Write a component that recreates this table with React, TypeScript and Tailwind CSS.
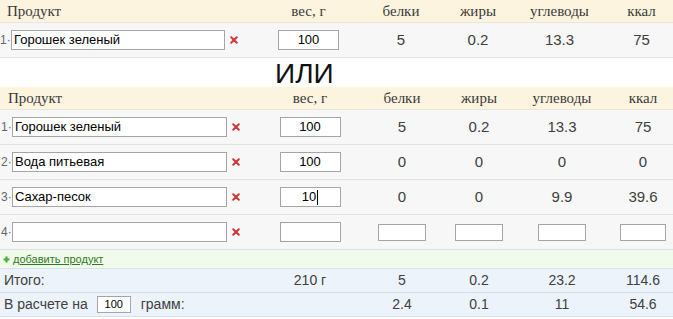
import React from "react";

const SANS = { fontFamily: '"Liberation Sans", Arial, sans-serif' };

function RedX() {
  return (
    <svg width="8" height="8" viewBox="0 0 8 8" className="shrink-0">
      <path d="M1.2 1.2 L6.8 6.8 M6.8 1.2 L1.2 6.8" stroke="#d03a3a" strokeWidth="2" strokeLinecap="round" />
    </svg>
  );
}

function Box({ className, children }: { className: string; children?: React.ReactNode }) {
  return (
    <div className={"border border-[#a5a5a5] bg-white flex items-center " + className}>{children}</div>
  );
}

type Cols = "top" | "bottom";

function gridClass(c: Cols) {
  return c === "top"
    ? "grid grid-cols-[269px_79px_106px_48px_115px_49px]"
    : "grid grid-cols-[270px_80px_104px_50px_116px_46px]";
}

function Header({ c }: { c: Cols }) {
  const pl = c === "top" ? "pl-[7px]" : "pl-[8px]";
  return (
    <div
      className={gridClass(c) + " h-[23px] border-b border-[#ebe6dc] bg-[#fdf4df] items-center text-[15px] text-[#3a3a3a]"}
      style={{ fontFamily: '"Liberation Serif", "Times New Roman", serif' }}
    >
      <div className={pl}>Продукт</div>
      <div className="text-center">вес, г</div>
      <div className="text-center">белки</div>
      <div className="text-center">жиры</div>
      <div className="text-center">углеводы</div>
      <div className="text-center">ккал</div>
    </div>
  );
}

function ProductRow({
  c,
  n,
  name,
  weight,
  vals,
  cursor,
}: {
  c: Cols;
  n: number;
  name: string;
  weight: string;
  vals: string[] | null;
  cursor?: boolean;
}) {
  const top = c === "top";
  return (
    <div className={gridClass(c) + " h-[35px] border-b border-[#e2e2e2] bg-[#f7f7f7] items-center"} style={SANS}>
      <div className={"flex items-center " + (top ? "pl-0" : "pl-[1px]")}>
        <span className="w-[11px] text-[12px] text-[#666] leading-none">{n}·</span>
        <Box className={(top ? "w-[214px]" : "w-[215px]") + " h-[20px] pl-[2px] text-[13px] text-black"}>
          {name}
        </Box>
        <span className="ml-[5px]">
          <RedX />
        </span>
      </div>
      <div className="flex justify-center">
        <Box className="w-[61px] h-[20px] justify-center text-[13px] text-black">
          {weight}
          {cursor && <span className="inline-block w-[1px] h-[15px] bg-black ml-[1px]" />}
        </Box>
      </div>
      {vals
        ? vals.map((v, i) => (
            <div key={i} className="text-center text-[15px] text-[#404040]">
              {v}
            </div>
          ))
        : [0, 1, 2, 3].map((i) => (
            <div key={i} className="flex justify-center">
              <Box className="w-[48px] h-[17px]" />
            </div>
          ))}
    </div>
  );
}

export default function App() {
  return (
    <div className="w-[673px] h-[319px] bg-white overflow-hidden" style={SANS}>
      {/* first table */}
      <Header c="top" />
      <ProductRow c="top" n={1} name="Горошек зеленый" weight="100" vals={["5", "0.2", "13.3", "75"]} />

      {/* ИЛИ */}
      <div className="h-[29px] bg-white pt-[4px]">
        <div className="pl-[275px] text-[28px] leading-[24px] text-[#111]">ИЛИ</div>
      </div>

      {/* second table */}
      <Header c="bottom" />
      <ProductRow c="bottom" n={1} name="Горошек зеленый" weight="100" vals={["5", "0.2", "13.3", "75"]} />
      <ProductRow c="bottom" n={2} name="Вода питьевая" weight="100" vals={["0", "0", "0", "0"]} />
      <ProductRow c="bottom" n={3} name="Сахар-песок" weight="10" vals={["0", "0", "9.9", "39.6"]} cursor />
      <ProductRow c="bottom" n={4} name="" weight="" vals={null} />

      {/* add product */}
      <div className="h-[19px] border-b border-[#d6e2ee] bg-[#f0fbeb] flex items-center pl-[3px]">
        <svg width="7" height="7" viewBox="0 0 7 7" className="shrink-0">
          <path d="M3.5 0.5 V6.5 M0.5 3.5 H6.5" stroke="#4caa3c" strokeWidth="2.2" />
        </svg>
        <span className="ml-[3px] text-[11px] text-[#2f7a22] underline leading-none">добавить продукт</span>
      </div>

      {/* totals */}
      <div className="grid grid-cols-[270px_80px_104px_50px_116px_46px] h-[24px] border-b border-[#d6e0ec] bg-[#edf3fb] items-center text-[14px] text-[#404040]">
        <div className="pl-[4px]">Итого:</div>
        <div className="text-center">210 г</div>
        <div className="text-center">5</div>
        <div className="text-center">0.2</div>
        <div className="text-center">23.2</div>
        <div className="text-center">114.6</div>
      </div>
      <div className="grid grid-cols-[270px_80px_104px_50px_116px_46px] h-[24px] border-b border-[#d6e0ec] bg-[#edf3fb] items-center text-[14px] text-[#404040]">
        <div className="pl-[4px] flex items-center">
          <span>В расчете на</span>
          <Box className="ml-[9px] w-[34px] h-[17px] justify-center text-[11px] text-black">100</Box>
          <span className="ml-[10px]">грамм:</span>
        </div>
        <div />
        <div className="text-center">2.4</div>
        <div className="text-center">0.1</div>
        <div className="text-center">11</div>
        <div className="text-center">54.6</div>
      </div>
    </div>
  );
}
